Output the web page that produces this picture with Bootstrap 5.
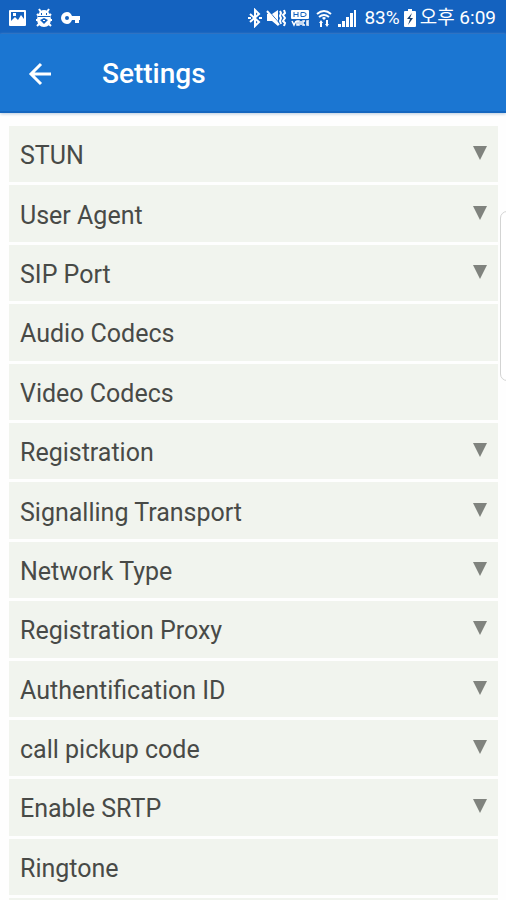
<!DOCTYPE html>
<html lang="en">
<head>
<meta charset="utf-8">
<meta name="viewport" content="width=device-width, initial-scale=1">
<title>Settings</title>
<link rel="stylesheet" href="https://cdn.jsdelivr.net/npm/bootstrap@5.3.0/dist/css/bootstrap.min.css">
<style>
body { font-family: Roboto, "Noto Sans CJK KR", sans-serif; background: #fefefe; color: #484a47; }
.status-bar { background: #1462bf; height: 34px; padding: 2px 10px 0 8px; font-size: 19px; line-height: 24px; }
.status-bar svg { display: block; fill: #fff; }
.app-bar { background: #1b76d2; height: 79px; padding: 3px 28px 0; gap: 50px; border-bottom: 2px solid #1567c0; box-shadow: 0 1px 3px #b9cbdc; }
.app-bar h1 { font-size: 28px; line-height: 32px; font-weight: 500; }
.settings-list { padding: 13px 8px 0 9px; gap: 3px; }
.settings-row { background: #f1f4ee; min-height: 56px; padding: 4px 11px 0; font-size: 25px; line-height: 32px; color: inherit; }
.settings-row svg { display: block; fill: #80837e; margin-bottom: 6px; }
.next-row { background: #f1f4ee; height: 2px; }
.edge-handle { top: 211px; right: -8px; width: 14px; height: 170px; background: #fff; border: 1px solid #d3d4d3; border-radius: 7px; }
</style>
<script defer src="https://cdn.jsdelivr.net/npm/bootstrap@5.3.0/dist/js/bootstrap.bundle.min.js"></script>
</head>
<body class="min-vh-100 d-flex flex-column position-relative overflow-x-hidden">
<div class="status-bar d-flex align-items-center justify-content-between text-white flex-shrink-0">
  <div class="d-flex align-items-center gap-2">
    <svg width="19" height="18" viewBox="0 0 19 18" aria-hidden="true"><path fill-rule="evenodd" d="M2 1h15q1 0 1 1v14q0 1-1 1H2q-1 0-1-1V2q0-1 1-1zM3 3v9l4-4 3 3 3-5 3 4V3zM5 4h3v3H5z"/></svg>
    <svg width="18" height="20" viewBox="0 0 18 20" aria-hidden="true"><path d="M4 1l2 3M14 1l-2 3M2 6l2 2M16 6l-2 2M1 12h3M17 12h-3M2 18l3-3M16 18l-3-3" stroke="#fff" stroke-width="2"/><path d="M9 2c3 0 5 2 6 5l1 4c0 5-3 8-7 8s-7-3-7-8l1-4c1-3 3-5 6-5z"/><path d="M6 5h1v2H6zM11 5h1v2h-1zM3 8h12v1H3zM5 12l4-2 4 2-4 4zM8 12v1h2v-1z" fill="#1462bf" fill-rule="evenodd"/></svg>
    <svg width="20" height="14" viewBox="0 0 20 14" aria-hidden="true"><path fill-rule="evenodd" d="M6 1c3 0 4 2 5 4h8v4h-1v3h-4V9h-3c-1 2-2 4-5 4a6 6 0 0 1 0-12zm0 4a2 2 0 1 0 0 4 2 2 0 0 0 0-4z"/></svg>
  </div>
  <div class="d-flex align-items-center gap-1">
    <svg width="14" height="20" viewBox="0 0 14 20" aria-hidden="true"><path d="M2 6l9 8-4 4V2l4 4-9 8" fill="none" stroke="#fff" stroke-width="2"/><path d="M0 9h3v2H0zM11 9h3v2h-3z"/></svg>
    <svg width="20" height="20" viewBox="0 0 20 20" aria-hidden="true"><path d="M1 6h5l6-4v16l-6-5H1z"/><path d="M14 3l1 2-1 3 1 2-1 3 1 3M18 2l1 3-2 2 2 3-2 3 2 2-1 3" fill="none" stroke="#fff" stroke-width="2"/><path d="M2 2l12 14" stroke="#1462bf"/><path d="M1 3l12 14" stroke="#fff" stroke-width="2"/></svg>
    <svg width="20" height="18" viewBox="0 0 20 18" aria-hidden="true"><rect x="1" y="1" width="18" height="9" rx="1"/><path d="M4 3v5M8 3v5M4 5.500h4M11 3.500h3l2 1v2l-2 1h-3z" fill="none" stroke="#1462bf"/><path d="M2 12l2 4 2-4M9 12H7v4h2zM11 12v4M15 12h-2v4h2M19 12h-2v4h2M17 14h2" fill="none" stroke="#fff" stroke-width="1.500"/></svg>
    <svg width="20" height="20" viewBox="0 0 20 20" aria-hidden="true"><path d="M3 6q7-6 14 0M5 9q5-4 10 0" fill="none" stroke="#fff" stroke-width="2"/><path d="M8 10q2-2 4 0l-2 2zM7 12l2 3H8v4H6v-4H5zM13 19l-2-3h1v-4h2v4h1z"/></svg>
    <svg class="me-1" width="18" height="18" viewBox="0 0 18 18" aria-hidden="true"><path d="M0 15h3v3H0zM4 12h3v6H4zM8 8h3v10H8zM12 4h3v14h-3zM16 1h2v17h-2z"/></svg>
    <span>83%</span>
    <svg width="12" height="18" viewBox="0 0 12 18" aria-hidden="true"><path d="M4 0h4v2h3q1 0 1 1v14q0 1-1 1H1q-1 0-1-1V3q0-1 1-1h3z"/><path d="M8 4l-5 6h3l-2 6 5-7H6z" fill="#173d6d"/></svg>
    <span>오후 6:09</span>
  </div>
</div>
<header class="app-bar d-flex align-items-center flex-shrink-0 text-white">
  <button type="button" class="btn p-0 border-0 text-white" aria-label="Back"><svg class="d-block" width="24" height="24" viewBox="0 0 24 24" fill="none" stroke="currentColor" stroke-width="3"><path d="M23 12H3M13 2L3 12l10 10"/></svg></button>
  <h1 class="m-0">Settings</h1>
</header>
<main class="settings-list d-flex flex-column flex-fill">
  <button type="button" class="settings-row border-0 text-start d-flex flex-fill align-items-center justify-content-between">STUN<svg width="14" height="14" viewBox="0 0 14 14" aria-hidden="true"><path d="M0 0h14L7 14z"/></svg></button>
  <button type="button" class="settings-row border-0 text-start d-flex flex-fill align-items-center justify-content-between">User Agent<svg width="14" height="14" viewBox="0 0 14 14" aria-hidden="true"><path d="M0 0h14L7 14z"/></svg></button>
  <button type="button" class="settings-row border-0 text-start d-flex flex-fill align-items-center justify-content-between">SIP Port<svg width="14" height="14" viewBox="0 0 14 14" aria-hidden="true"><path d="M0 0h14L7 14z"/></svg></button>
  <button type="button" class="settings-row border-0 text-start d-flex flex-fill align-items-center">Audio Codecs</button>
  <button type="button" class="settings-row border-0 text-start d-flex flex-fill align-items-center">Video Codecs</button>
  <button type="button" class="settings-row border-0 text-start d-flex flex-fill align-items-center justify-content-between">Registration<svg width="14" height="14" viewBox="0 0 14 14" aria-hidden="true"><path d="M0 0h14L7 14z"/></svg></button>
  <button type="button" class="settings-row border-0 text-start d-flex flex-fill align-items-center justify-content-between">Signalling Transport<svg width="14" height="14" viewBox="0 0 14 14" aria-hidden="true"><path d="M0 0h14L7 14z"/></svg></button>
  <button type="button" class="settings-row border-0 text-start d-flex flex-fill align-items-center justify-content-between">Network Type<svg width="14" height="14" viewBox="0 0 14 14" aria-hidden="true"><path d="M0 0h14L7 14z"/></svg></button>
  <button type="button" class="settings-row border-0 text-start d-flex flex-fill align-items-center justify-content-between">Registration Proxy<svg width="14" height="14" viewBox="0 0 14 14" aria-hidden="true"><path d="M0 0h14L7 14z"/></svg></button>
  <button type="button" class="settings-row border-0 text-start d-flex flex-fill align-items-center justify-content-between">Authentification ID<svg width="14" height="14" viewBox="0 0 14 14" aria-hidden="true"><path d="M0 0h14L7 14z"/></svg></button>
  <button type="button" class="settings-row border-0 text-start d-flex flex-fill align-items-center justify-content-between">call pickup code<svg width="14" height="14" viewBox="0 0 14 14" aria-hidden="true"><path d="M0 0h14L7 14z"/></svg></button>
  <button type="button" class="settings-row border-0 text-start d-flex flex-fill align-items-center justify-content-between">Enable SRTP<svg width="14" height="14" viewBox="0 0 14 14" aria-hidden="true"><path d="M0 0h14L7 14z"/></svg></button>
  <button type="button" class="settings-row border-0 text-start d-flex flex-fill align-items-center">Ringtone</button>
  <div class="next-row flex-shrink-0"></div>
</main>
<div class="edge-handle position-absolute" aria-hidden="true"></div>
</body>
</html>
